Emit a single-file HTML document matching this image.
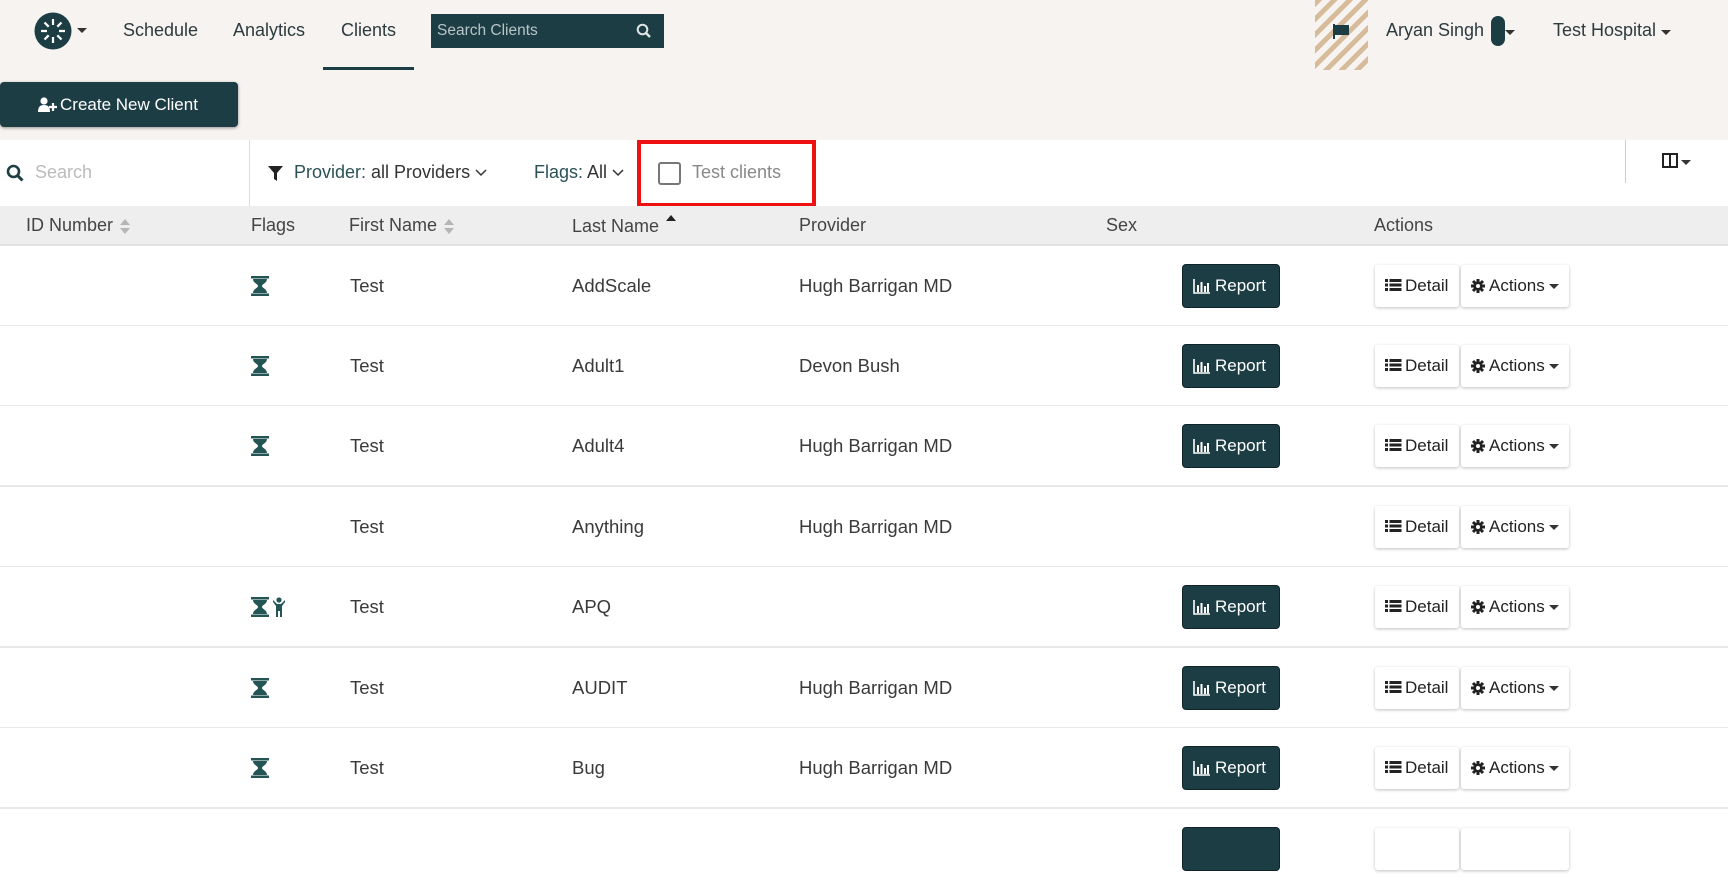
<!DOCTYPE html>
<html><head><meta charset="utf-8"><style>
*{box-sizing:border-box;margin:0;padding:0}
body{width:1728px;height:836px;overflow:hidden;background:#f6f3f0;font-family:"Liberation Sans",sans-serif;color:#333;position:relative}
.a{position:absolute;white-space:nowrap}
.nav{font-size:18px;color:#2d3b3e;top:20px}
.tb{font-size:18px;top:162px}
.th{font-size:18px;color:#444;top:215px}
.row{position:absolute;left:0;width:1728px;height:81px;background:#fff;border-bottom:2px solid #e8e8e8}
.row .c{position:absolute;top:29px;font-size:18.5px;color:#3a3a3a;white-space:nowrap}
.rep{position:absolute;left:1182px;top:18px;width:98px;height:44px;background:#1c3d44;border:1px solid #0f2428;border-radius:4px;color:#fff;font-size:17px;line-height:42px;padding-left:32px}
.rep svg{position:absolute;left:10px;top:14px}
.det{position:absolute;left:1375px;top:19px;width:84px;height:42px;background:#fff;border-radius:3px;box-shadow:0 1px 3px rgba(0,0,0,.25);font-size:17px;line-height:42px;padding-left:30px;color:#222}
.det svg,.act svg{position:absolute;left:10px;top:14px}
.act{position:absolute;left:1461px;top:19px;width:108px;height:42px;background:#fff;border-radius:3px;box-shadow:0 1px 3px rgba(0,0,0,.25);font-size:17px;line-height:42px;padding-left:28px;color:#222}
.hg{position:absolute;left:251px;top:30px}
.car{display:inline-block;width:0;height:0;border-left:5px solid transparent;border-right:5px solid transparent;border-top:5px solid #333;vertical-align:middle;margin-left:4px}
.srt{display:inline-block;vertical-align:middle;margin-left:2px}
</style></head><body>
<svg width="0" height="0" style="position:absolute"><defs>
<g id="bar"><path d="M1 0v14h16" stroke="#fff" stroke-width="1.6" fill="none"/><rect x="4" y="6" width="2" height="7" fill="#fff"/><rect x="7.5" y="3" width="2" height="10" fill="#fff"/><rect x="11" y="7" width="2" height="6" fill="#fff"/><rect x="14" y="4" width="2" height="9" fill="#fff"/></g>
<g id="lst" fill="#222"><rect x="0" y="0" width="3" height="3"/><rect x="4.5" y="0" width="12" height="3"/><rect x="0" y="4.5" width="3" height="3"/><rect x="4.5" y="4.5" width="12" height="3"/><rect x="0" y="9" width="3" height="3"/><rect x="4.5" y="9" width="12" height="3"/></g>
<g id="gear"><circle cx="7" cy="7" r="4.6" fill="#222"/><g stroke="#222" stroke-width="3"><path d="M7 0v14M0 7h14M2 2l10 10M12 2L2 12"/></g><circle cx="7" cy="7" r="2" fill="#fff"/></g>
<g id="hgp"><path d="M0 0h18v2.5H0zM0 17.5h18V20H0zM2 3h14c0 4-5 5-5 7s5 3 5 7H2c0-4 5-5 5-7S2 7 2 3z" fill="#245555"/></g>
<g id="srt"><path d="M0 6L5 0l5 6zM0 9l5 6 5-6z" fill="#b5b5b5"/></g>
</defs></svg>
<!-- logo -->
<svg class="a" style="left:34px;top:12px" width="38" height="38" viewBox="0 0 38 38"><circle cx="19" cy="19" r="18.5" fill="#1c3d44"/><g stroke="#fff" stroke-width="2.2" fill="none"><path d="M19 7v6M19 25v6M7 19h6M25 19h6M10.5 10.5l4.2 4.2M23.3 23.3l4.2 4.2M27.5 10.5l-4.2 4.2M14.7 23.3l-4.2 4.2"/></g><circle cx="19" cy="19" r="4" fill="#1c3d44"/></svg>
<span class="a car" style="left:77px;top:28px;margin:0"></span>
<div class="a nav" style="left:123px">Schedule</div>
<div class="a nav" style="left:233px">Analytics</div>
<div class="a nav" style="left:341px">Clients</div>
<div class="a" style="left:323px;top:67px;width:91px;height:3px;background:#1c3d44"></div>
<div class="a" style="left:431px;top:14px;width:233px;height:34px;background:#1c3d44;color:#b9c4c6;font-size:15.5px;line-height:34px;padding-left:6px">Search Clients</div>
<svg class="a" style="left:636px;top:23px" width="16" height="16" viewBox="0 0 16 16"><circle cx="6.5" cy="6.5" r="4.8" stroke="#dfe5e6" stroke-width="2" fill="none"/><path d="M10 10l4 4" stroke="#dfe5e6" stroke-width="2.4"/></svg>
<div class="a" style="left:1315px;top:0;width:53px;height:70px;background:repeating-linear-gradient(135deg,#d7bc9c 0 5px,#f6f3f0 5px 11px)"></div>
<svg class="a" style="left:1333px;top:24px" width="17" height="15" viewBox="0 0 17 15"><path d="M1 0v15" stroke="#1c3d44" stroke-width="2"/><path d="M2 1h14v10H2z" fill="#1c3d44"/></svg>
<div class="a nav" style="left:1386px">Aryan Singh</div>
<div class="a" style="left:1491px;top:16px;width:14px;height:30px;background:#1c3d44;border-radius:7px"></div>
<span class="a car" style="left:1505px;top:30px;margin:0"></span>
<div class="a nav" style="left:1553px">Test Hospital</div>
<span class="a car" style="left:1661px;top:30px;margin:0"></span>
<div class="a" style="left:0;top:82px;width:238px;height:45px;background:#1c3d44;border-radius:4px;box-shadow:0 1px 3px rgba(0,0,0,.4);color:#fff;font-size:17px;line-height:45px;padding-left:38px">
<svg style="position:absolute;left:38px;top:15px" width="19" height="16" viewBox="0 0 19 16"><circle cx="6" cy="4" r="3.6" fill="#fff"/><path d="M0 15c0-5 2-7 6-7s6 2 6 7z" fill="#fff"/><path d="M15 6v8M11 10h8" stroke="#fff" stroke-width="2.2"/></svg>
<span style="margin-left:22px">Create New Client</span></div>
<div class="a" style="left:0;top:140px;width:1728px;height:66px;background:#fff"></div>
<svg class="a" style="left:6px;top:164px" width="18" height="18" viewBox="0 0 18 18"><circle cx="7.5" cy="7.5" r="5.5" stroke="#1c3d44" stroke-width="2.6" fill="none"/><path d="M11.5 11.5l5 5" stroke="#1c3d44" stroke-width="3"/></svg>
<div class="a tb" style="left:35px;color:#bbb">Search</div>
<div class="a" style="left:249px;top:140px;width:1px;height:66px;background:#ddd"></div>
<svg class="a" style="left:268px;top:166px" width="15" height="15" viewBox="0 0 15 15"><path d="M0 0h15L9 7v8L6 13V7z" fill="#222"/></svg>
<div class="a tb" style="left:294px;color:#2b5158">Provider: <span style="color:#333">all Providers</span> <svg width="12" height="8" viewBox="0 0 12 8" style="vertical-align:middle"><path d="M1 1l5 5 5-5" stroke="#333" stroke-width="1.5" fill="none"/></svg></div>
<div class="a tb" style="left:534px;color:#2b5158">Flags: <span style="color:#333">All</span> <svg width="12" height="8" viewBox="0 0 12 8" style="vertical-align:middle"><path d="M1 1l5 5 5-5" stroke="#333" stroke-width="1.5" fill="none"/></svg></div>
<div class="a" style="left:637px;top:140px;width:179px;height:67px;border:4px solid #ee1111"></div>
<div class="a" style="left:658px;top:162px;width:23px;height:23px;border:2.5px solid #777;border-radius:3px"></div>
<div class="a tb" style="left:692px;color:#888">Test clients</div>
<div class="a" style="left:1625px;top:140px;width:1px;height:43px;background:#ccc"></div>
<svg class="a" style="left:1662px;top:153px" width="16" height="15" viewBox="0 0 16 15"><rect x="1" y="1" width="14" height="13" stroke="#222" stroke-width="2" fill="none"/><path d="M8 1v13" stroke="#222" stroke-width="2"/></svg>
<span class="a car" style="left:1681px;top:160px;margin:0"></span>
<div class="a" style="left:0;top:206px;width:1728px;height:40px;background:#eeeeee;border-bottom:2px solid #e2e2e2"></div>
<div class="a th" style="left:26px">ID Number <svg class="srt" width="10" height="15"><use href="#srt"/></svg></div>
<div class="a th" style="left:251px">Flags</div>
<div class="a th" style="left:349px">First Name <svg class="srt" width="10" height="15"><use href="#srt"/></svg></div>
<div class="a th" style="left:572px">Last Name <svg class="srt" width="10" height="15" style="vertical-align:2px"><path d="M0 6L5 0l5 6z" fill="#222"/></svg></div>
<div class="a th" style="left:799px">Provider</div>
<div class="a th" style="left:1106px">Sex</div>
<div class="a th" style="left:1374px">Actions</div>

<div class="row" style="top:246px">
<svg class="hg" width="18" height="20"><use href="#hgp"/></svg>
<div class="c" style="left:350px">Test</div><div class="c" style="left:572px">AddScale</div><div class="c" style="left:799px">Hugh Barrigan MD</div>
<div class="rep"><svg width="18" height="15"><use href="#bar"/></svg>Report</div><div class="det"><svg width="17" height="12"><use href="#lst"/></svg>Detail</div><div class="act"><svg width="14" height="14"><use href="#gear"/></svg>Actions<span class="car"></span></div></div>

<div class="row" style="top:326px">
<svg class="hg" width="18" height="20"><use href="#hgp"/></svg>
<div class="c" style="left:350px">Test</div><div class="c" style="left:572px">Adult1</div><div class="c" style="left:799px">Devon Bush</div>
<div class="rep"><svg width="18" height="15"><use href="#bar"/></svg>Report</div><div class="det"><svg width="17" height="12"><use href="#lst"/></svg>Detail</div><div class="act"><svg width="14" height="14"><use href="#gear"/></svg>Actions<span class="car"></span></div></div>

<div class="row" style="top:406px">
<svg class="hg" width="18" height="20"><use href="#hgp"/></svg>
<div class="c" style="left:350px">Test</div><div class="c" style="left:572px">Adult4</div><div class="c" style="left:799px">Hugh Barrigan MD</div>
<div class="rep"><svg width="18" height="15"><use href="#bar"/></svg>Report</div><div class="det"><svg width="17" height="12"><use href="#lst"/></svg>Detail</div><div class="act"><svg width="14" height="14"><use href="#gear"/></svg>Actions<span class="car"></span></div></div>

<div class="row" style="top:487px">
<div class="c" style="left:350px">Test</div><div class="c" style="left:572px">Anything</div><div class="c" style="left:799px">Hugh Barrigan MD</div>
<div class="det"><svg width="17" height="12"><use href="#lst"/></svg>Detail</div><div class="act"><svg width="14" height="14"><use href="#gear"/></svg>Actions<span class="car"></span></div></div>

<div class="row" style="top:567px">
<svg class="hg" width="18" height="20"><use href="#hgp"/></svg>
<svg style="position:absolute;left:273px;top:30px" width="12" height="20" viewBox="0 0 12 20"><circle cx="6" cy="3" r="2.6" fill="#245555"/><path d="M0 3l4 4h4l4-4v2L9 9v11H7v-6H5v6H3V9L0 5z" fill="#245555"/></svg>
<div class="c" style="left:350px">Test</div><div class="c" style="left:572px">APQ</div>
<div class="rep"><svg width="18" height="15"><use href="#bar"/></svg>Report</div><div class="det"><svg width="17" height="12"><use href="#lst"/></svg>Detail</div><div class="act"><svg width="14" height="14"><use href="#gear"/></svg>Actions<span class="car"></span></div></div>

<div class="row" style="top:648px">
<svg class="hg" width="18" height="20"><use href="#hgp"/></svg>
<div class="c" style="left:350px">Test</div><div class="c" style="left:572px">AUDIT</div><div class="c" style="left:799px">Hugh Barrigan MD</div>
<div class="rep"><svg width="18" height="15"><use href="#bar"/></svg>Report</div><div class="det"><svg width="17" height="12"><use href="#lst"/></svg>Detail</div><div class="act"><svg width="14" height="14"><use href="#gear"/></svg>Actions<span class="car"></span></div></div>

<div class="row" style="top:728px">
<svg class="hg" width="18" height="20"><use href="#hgp"/></svg>
<div class="c" style="left:350px">Test</div><div class="c" style="left:572px">Bug</div><div class="c" style="left:799px">Hugh Barrigan MD</div>
<div class="rep"><svg width="18" height="15"><use href="#bar"/></svg>Report</div><div class="det"><svg width="17" height="12"><use href="#lst"/></svg>Detail</div><div class="act"><svg width="14" height="14"><use href="#gear"/></svg>Actions<span class="car"></span></div></div>

<div class="row" style="top:809px;border:none">
<div class="rep"></div><div class="det"></div><div class="act"></div></div>
</body></html>
